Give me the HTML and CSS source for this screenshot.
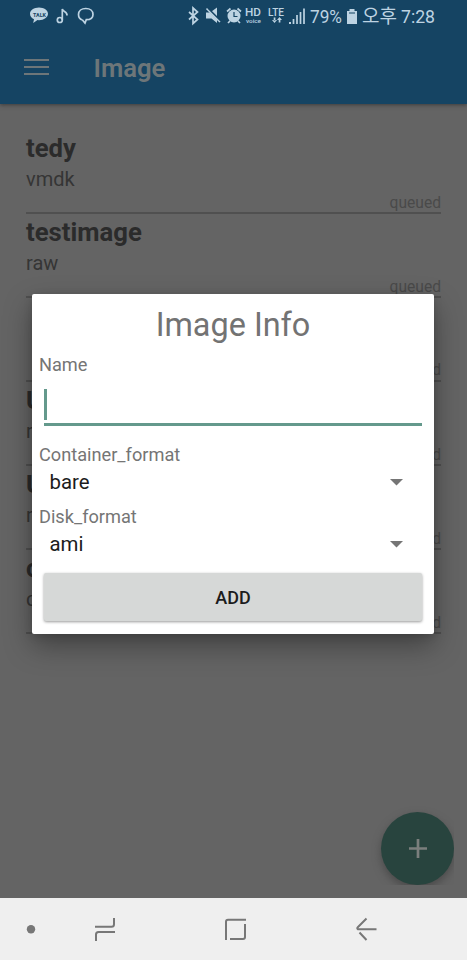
FILE: index.html
```html
<!DOCTYPE html>
<html lang="ko">
<head>
<meta charset="utf-8">
<title>Image</title>
<link rel="stylesheet" href="styles.css">
</head>
<body>
<div class="phone">
  <header class="top">
    <svg class="status" width="467" height="32" viewBox="0 0 467 32">
      <g class="fill">
        <path d="M39 7.500c-5 0-9 2.800-9 6.300 0 2.400 1.600 4.300 4 5.400l-.8 3.800 4.300-2.900 1.500.1c5 0 9-2.900 9-6.400s-4-6.300-9-6.300z"/>
        <path d="M206 12.500h4l7 7v3.500l-5.500-4.500h-5.500zM211.500 11.500l5.500-4v9.500z"/>
        <path d="M227.500 16a6.500 6.500 0 1 0 13 0a6.500 6.500 0 1 0-13 0z"/>
        <path d="M289 22h2v2h-2zM347 11h10v13h-10zM349.500 9h5v2h-5z"/>
        <path d="M272 20l2.500 3 2.500-3zM273.700 17.500h1.700v3h-1.700zM277 20l2.500-3 2.500 3zM278.700 19.500h1.700v3h-1.700z"/>
      </g>
      <g class="line">
        <path d="M62.300 20V9c.5 3 5.200 2 4.700 6.500"/><circle cx="59.800" cy="20" r="2.500"/>
        <path d="M82.500 20c-2.700-.8-4-3-4-5.500 0-3.800 3-6 7.300-6s7.200 2.300 7.200 5.900c0 3.400-2.800 5.300-6.700 5.300l-1.300 3.300-2.500-3"/>
        <path d="M189 12l8.500 7.500-4.500 4V8l4.500 4-8.500 7.500"/>
        <path d="M206.500 8.500l13.500 13.500"/>
        <path d="M227 11.500l3.500-3M237.500 8.500l3.500 3M230 21l-2 2M238 21l2 2"/>
        <path d="M293.500 19v5M297 15v9M300.500 12v12M304 8.500v15.500"/>
      </g>
      <path class="cut" d="M208 8l13 13"/>
      <path class="cut" d="M234 12v4.500h3.500M349 13h6"/>
      <g class="words">
        <text class="talk" x="33" y="17" textLength="13" lengthAdjust="spacingAndGlyphs">TALK</text>
        <text class="hd" x="245" y="15.500" textLength="16" lengthAdjust="spacingAndGlyphs">HD</text>
        <text class="voice" x="246" y="22.500" textLength="15" lengthAdjust="spacingAndGlyphs">voice</text>
        <text class="lte" x="268" y="15.500" textLength="16" lengthAdjust="spacingAndGlyphs">LTE</text>
        <text class="clock" x="310" y="23" textLength="32" lengthAdjust="spacingAndGlyphs">79%</text>
        <text class="clock" x="362" y="22.500" textLength="35" lengthAdjust="spacingAndGlyphs">오후</text>
        <text class="clock" x="401" y="23" textLength="34" lengthAdjust="spacingAndGlyphs">7:28</text>
      </g>
    </svg>
    <div class="bar">
      <svg class="menu" width="25" height="17" viewBox="0 0 25 17"><path d="M0 1h25M0 8h25M0 15h25"/></svg>
      <h1>Image</h1>
    </div>
  </header>
  <main class="list">
    <div class="row"><b>tedy</b><span>vmdk</span><small>queued</small></div>
    <div class="row"><b>testimage</b><span>raw</span><small>queued</small></div>
    <div class="row"><b></b><span></span><small>queued</small></div>
    <div class="row"><b>U</b><span>r</span><small>queued</small></div>
    <div class="row"><b>U</b><span>r</span><small>queued</small></div>
    <div class="row"><b>c</b><span>q</span><small>queued</small></div>
  </main>
  <div class="fab-box"><div class="fab"><svg width="18" height="19" viewBox="0 0 18 19"><path d="M9 0v19M0 9.500h18"/></svg></div></div>
  <section class="dialog">
    <h2>Image Info</h2>
    <label class="name">Name</label>
    <div class="input"><i></i></div>
    <label class="container">Container_format</label>
    <div class="select"><span>bare</span><svg width="13" height="7" viewBox="0 0 13 7"><path d="M0 0h13L6.500 6.500z"/></svg></div>
    <label class="disk">Disk_format</label>
    <div class="select"><span>ami</span><svg width="13" height="7" viewBox="0 0 13 7"><path d="M0 0h13L6.500 6.500z"/></svg></div>
    <button>ADD</button>
  </section>
  <nav>
    <svg width="467" height="62" viewBox="0 0 467 62">
      <circle cx="31" cy="31.300" r="4.200"/>
      <path d="M95 28.800h16.500q2.500 0 2.500-2.500V20M115 34h-16.500q-2.500 0-2.500 2.500V43"/>
      <path d="M246 21.800h-18q-2 0-2 2V42M245 26v13q0 2-2 2h-13"/>
      <path d="M376.500 31.300h-18.500q-1.500-.8 0-2.300l8.500-8.500M359.500 34.500l7 7.500"/>
    </svg>
  </nav>
</div>
</body>
</html>
```
FILE: styles.css
```css
* { box-sizing: border-box; }
body { margin: 0; font-family: Roboto, sans-serif; }
.phone { position: relative; width: 467px; height: 960px; overflow: hidden; background: #646464; display: flex; flex-direction: column; }
.top { height: 104px; flex: none; background: #154463; box-shadow: 0 1px 4px #3b3b3b; }
.status { display: block; }
.fill { fill: #bdd3e2; }
.line { fill: none; stroke: #bdd3e2; stroke-width: 1.7; }
.cut { fill: none; stroke: #154463; stroke-width: 1.2; }
.words { fill: #bdd3e2; font-family: Roboto, "Noto Sans CJK KR", sans-serif; }
.talk { fill: #154463; font-size: 6px; font-weight: 700; }
.hd { font-size: 10px; font-weight: 500; }
.voice { font-size: 6px; font-weight: 500; }
.lte { font-size: 10px; font-weight: 500; }
.clock { font-size: 19px; }
.bar { height: 72px; display: flex; align-items: center; padding: 0 0 1px 24px; }
.menu { fill: none; stroke: #6d7679; stroke-width: 2; }
h1 { margin: 0 0 0 44.500px; font-size: 25.700px; line-height: 32px; font-weight: 600; color: #6d7679; }
.list { padding: 26px 26px 0; flex: 1; }
.row { height: 84px; padding-top: 3px; display: flex; flex-direction: column; border-bottom: 2px solid #505050; }
.row b { font-size: 25.700px; line-height: 31px; height: 31px; color: #2b2b2b; }
.row span { font-size: 20px; line-height: 24px; height: 24px; margin-top: 3px; color: #353535; }
.row small { font-size: 15.600px; line-height: 19px; margin-top: 2.500px; align-self: flex-end; color: #4a4a4a; }
.fab-box { position: absolute; left: 370px; top: 800px; width: 84px; height: 85px; overflow: hidden; padding: 12px 0 0 11px; }
.fab { width: 73px; height: 73px; border-radius: 50%; background: #28443e; display: flex; align-items: center; justify-content: center; box-shadow: 0 4px 8px #4a4a4a; }
.fab path { stroke: #7b7f7d; stroke-width: 2.700; }
.dialog { position: absolute; left: 32px; top: 294px; width: 402px; height: 340px; background: #fff; border-radius: 2px; box-shadow: 0 12px 28px rgba(0,0,0,.35), 0 2px 8px rgba(0,0,0,.15); padding: 9px 7px 0; display: flex; flex-direction: column; }
h2 { margin: 0; font-size: 32.400px; line-height: 44px; height: 44px; font-weight: 400; text-align: center; color: #737373; }
label { font-size: 18.200px; line-height: 24px; height: 24px; color: #757575; }
.name { margin-top: 6px; }
.input { height: 49px; margin: 0 5px; border-bottom: 3px solid #64998c; padding-top: 12px; }
.input i { display: block; width: 3px; height: 31px; background: #64998c; }
.container { margin-top: 17px; }
.select { height: 32px; padding: 0 24px 2px 10.500px; display: flex; align-items: center; justify-content: space-between; font-size: 20.400px; color: #1c1c1c; }
.select path { fill: #757575; }
.disk { margin-top: 6px; }
button { height: 48px; margin: 12px 5px 0; border: 0; border-radius: 2px; background: #d6d8d7; font: 500 18px Roboto, sans-serif; color: #1c1c1c; box-shadow: 0 1px 3px rgba(0,0,0,.4); }
nav { position: relative; height: 62px; flex: none; background: #efefef; }
nav circle { fill: #777; }
nav path { fill: none; stroke: #777; stroke-width: 2; }
```
